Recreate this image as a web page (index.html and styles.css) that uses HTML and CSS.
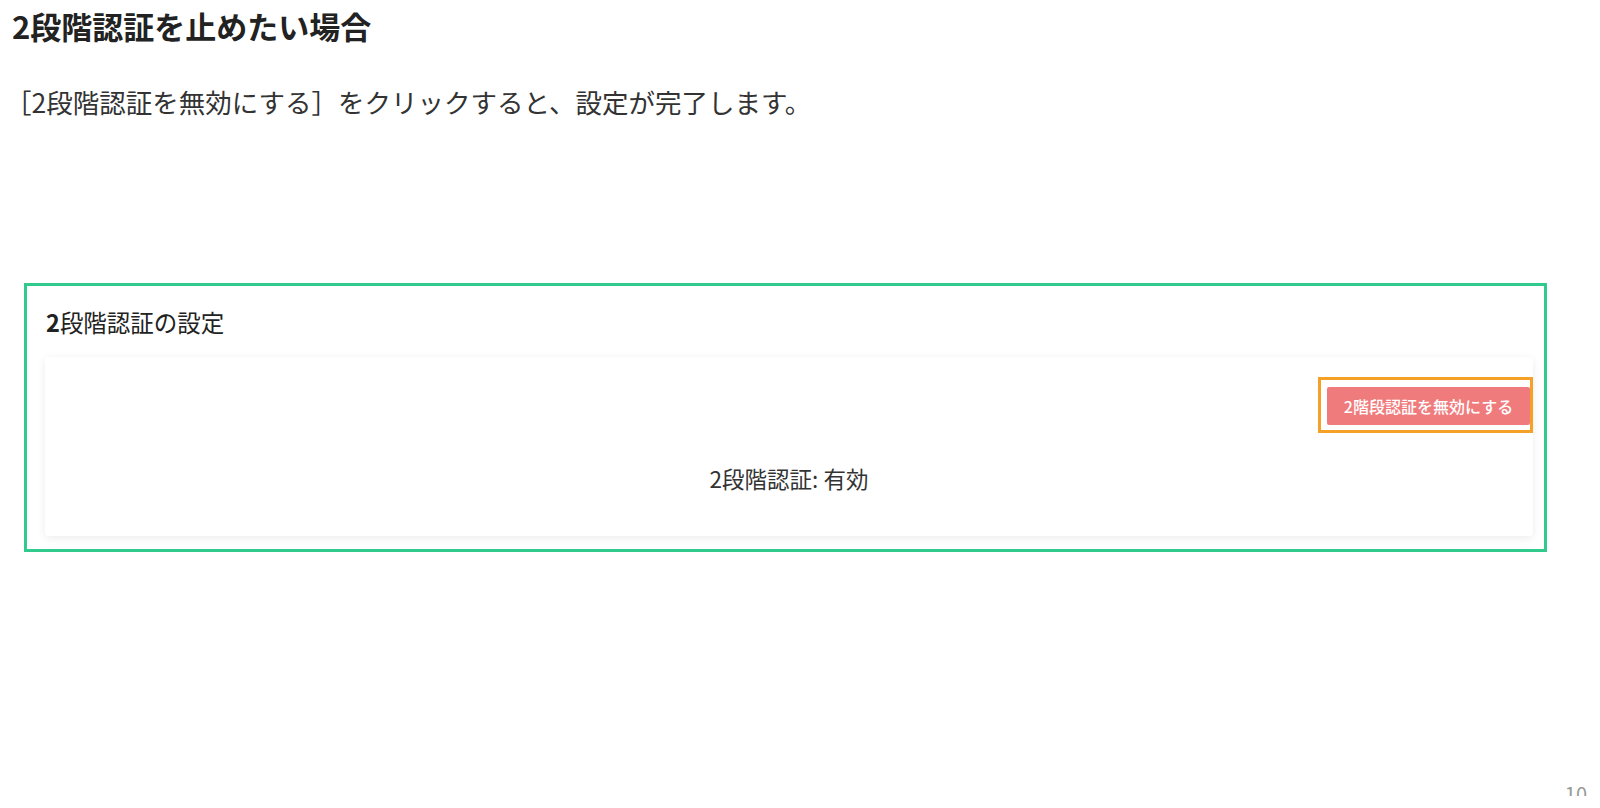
FILE: index.html
```html
<!DOCTYPE html>
<html lang="ja">
<head>
    <meta charset="UTF-8">
    <meta name="viewport" content="width=device-width, initial-scale=1.0">
    <title>2段階認証を止めたい場合</title>
    <link rel="stylesheet" href="styles.css">
</head>
<body>
    <div class="slide">
        <h1 class="title">2段階認証を止めたい場合</h1>
        <p class="lead">［2段階認証を無効にする］をクリックすると、設定が完了します。</p>

        <!-- Screenshot of the settings page -->
        <div class="shot">
            <h2 class="shot-heading"><b>2</b>段階認証の設定</h2>
            <div class="card">
                <div class="card-actions">
                    <div class="highlight">
                        <button class="danger-btn">2階段認証を無効にする</button>
                    </div>
                </div>
                <div class="status">2段階認証: 有効</div>
            </div>
        </div>

        <div class="page-no">10</div>
    </div>
</body>
</html>
```

FILE: styles.css
```css
* {
    box-sizing: border-box;
}

body {
    margin: 0;
    padding: 0;
    background-color: #fff;
    font-family: "Noto Sans CJK JP", "Noto Sans", sans-serif;
    color: #333;
}

.slide {
    height: 796px;
    overflow: hidden;
    display: flex;
    flex-direction: column;
}

.title {
    margin: 0;
    padding: 8px 0 0 12px;
    font-size: 31px;
    line-height: 36px;
    font-weight: 700;
    color: #222;
}

.lead {
    margin: 40px 0 0;
    padding-left: 5px;
    font-size: 26.5px;
    line-height: 36px;
    color: #333;
}

.shot {
    margin: 163px 0 0 24px;
    width: 1523px;
    height: 269px;
    border: 3px solid #2fca8c;
    padding: 21px 11px 13px 18px;
}

.shot-heading {
    margin: 0 0 20px 1px;
    font-size: 23.5px;
    line-height: 30px;
    font-weight: 400;
    color: #222;
}

.card {
    background-color: #fff;
    box-shadow: 0 2px 8px rgba(0, 0, 0, 0.08);
    border-radius: 3px;
    padding: 20px 0 44px;
}

.card-actions {
    display: flex;
    justify-content: flex-end;
}

.highlight {
    border: 3px solid #f5a026;
    padding: 7px 0 5px 6px;
}

.danger-btn {
    display: block;
    width: 203px;
    height: 38px;
    border: none;
    border-radius: 2px;
    background-color: #f07b7d;
    color: #fff;
    font-family: inherit;
    font-size: 16px;
    font-weight: 500;
    line-height: 38px;
    padding: 0;
}

.status {
    margin-top: 31px;
    text-align: center;
    font-size: 22.5px;
    line-height: 28px;
    color: #333;
}

.page-no {
    margin-top: auto;
    height: 14px;
    overflow: hidden;
    text-align: right;
    padding-right: 13px;
    font-size: 20px;
    line-height: 24px;
    color: #999;
}
```
